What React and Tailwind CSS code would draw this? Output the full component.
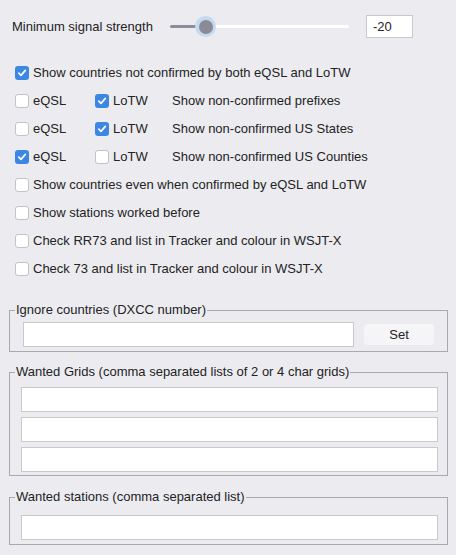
import React from 'react';

const Check = ({ checked }) => (
    <span
        className={
            checked
                ? 'w-[14px] h-[14px] rounded-[3px] bg-[#3d87e4] flex items-center justify-center shrink-0'
                : 'w-[14px] h-[14px] rounded-[3px] bg-white border border-[#c4c4c8] shrink-0'
        }
    >
        {checked && (
            <svg width="10" height="10" viewBox="0 0 10 10">
                <path d="M1.8 5.2 L4 7.4 L8.3 2.4" fill="none" stroke="white" strokeWidth="1.7" strokeLinecap="round" strokeLinejoin="round" />
            </svg>
        )}
    </span>
);

const CheckRow = ({ checked, label }) => (
    <div className="h-[28px] flex items-center pl-[15px]">
        <Check checked={checked} />
        <span className="ml-[4px]">{label}</span>
    </div>
);

const TripleRow = ({ eqsl, lotw, label }) => (
    <div className="h-[28px] flex items-center pl-[15px]">
        <div className="w-[80px] flex items-center">
            <Check checked={eqsl} />
            <span className="ml-[4px]">eQSL</span>
        </div>
        <div className="w-[77px] flex items-center">
            <Check checked={lotw} />
            <span className="ml-[4px]">LoTW</span>
        </div>
        <span>{label}</span>
    </div>
);

const Field = ({ className }) => (
    <div className={'h-[25px] bg-white border border-[#c9c9cc] ' + className}></div>
);

const App = () => {
    return (
        <div
            className="w-[456px] h-[555px] bg-[#ececf0] text-[13px] text-[#232323] overflow-hidden"
            style={{ fontFamily: '"Liberation Sans", Arial, sans-serif' }}
        >
            {/* Signal strength */}
            <div className="pt-[15px] flex items-center h-[38px]">
                <span className="ml-[12px] w-[158px]">Minimum signal strength</span>
                <div className="relative w-[179px] h-[23px] flex items-center">
                    <div className="w-[35px] h-[3px] bg-[#8c8c9a] rounded-l-full"></div>
                    <div className="flex-1 h-[3px] bg-white rounded-r-full"></div>
                    <div className="absolute left-[25px] top-[1px] w-[21px] h-[21px] rounded-full bg-[#c6d9ef] flex items-center justify-center">
                        <div className="w-[14px] h-[14px] rounded-full bg-[#8a8a99]"></div>
                    </div>
                </div>
                <div className="ml-[17px] w-[47px] h-[23px] bg-white border border-[#c9c9cc] flex items-center pl-[6px]">
                    -20
                </div>
            </div>

            {/* Checkboxes */}
            <div className="mt-[21px]">
                <CheckRow checked label="Show countries not confirmed by both eQSL and LoTW" />
                <TripleRow eqsl={false} lotw label="Show non-confirmed prefixes" />
                <TripleRow eqsl={false} lotw label="Show non-confirmed US States" />
                <TripleRow eqsl lotw={false} label="Show non-confirmed US Counties" />
                <CheckRow checked={false} label="Show countries even when confirmed by eQSL and LoTW" />
                <CheckRow checked={false} label="Show stations worked before" />
                <CheckRow checked={false} label="Check RR73 and list in Tracker and colour in WSJT-X" />
                <CheckRow checked={false} label="Check 73 and list in Tracker and colour in WSJT-X" />
            </div>

            {/* Ignore countries */}
            <fieldset className="mt-[19px] ml-[9px] w-[439px] border border-[#a9a9ae] pt-[4px] pb-[4px]">
                <legend className="ml-[5px] px-[1px] leading-[16px]">Ignore countries (DXCC number)</legend>
                <div className="flex items-center">
                    <Field className="ml-[13px] w-[331px]" />
                    <button className="ml-[10px] w-[70px] h-[21px] bg-[#f5f5f7] rounded-[4px] text-[13px]">Set</button>
                </div>
            </fieldset>

            {/* Wanted grids */}
            <fieldset className="mt-[12px] ml-[9px] w-[439px] border border-[#a9a9ae] pt-[7px] pb-[3px]">
                <legend className="ml-[5px] px-[1px] leading-[16px]">Wanted Grids (comma separated lists of 2 or 4 char grids)</legend>
                <div className="flex flex-col gap-[5px] pl-[11px] pr-[9px]">
                    <Field className="w-full" />
                    <Field className="w-full" />
                    <Field className="w-full" />
                </div>
            </fieldset>

            {/* Wanted stations */}
            <fieldset className="mt-[13px] ml-[9px] w-[439px] border border-[#a9a9ae] pt-[10px] pb-[4px]">
                <legend className="ml-[5px] px-[1px] leading-[16px]">Wanted stations (comma separated list)</legend>
                <div className="pl-[11px] pr-[9px]">
                    <Field className="w-full" />
                </div>
            </fieldset>
        </div>
    );
};

export default App;
